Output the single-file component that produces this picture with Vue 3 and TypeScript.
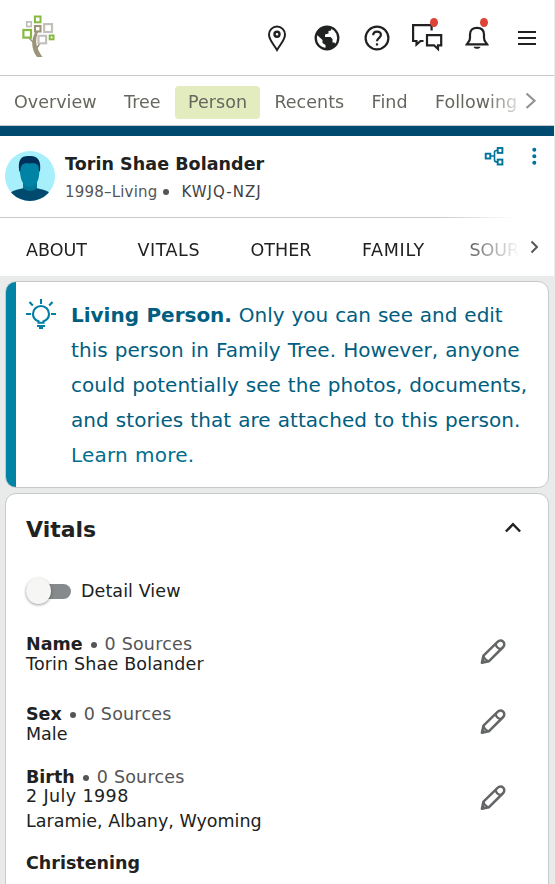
<script setup lang="ts">
interface Fact {
  label: string
  values: string[]
  sources: number
  kind: string
}

const navItems: { label: string; active?: boolean }[] = [
  { label: 'Overview' },
  { label: 'Tree' },
  { label: 'Person', active: true },
  { label: 'Recents' },
  { label: 'Find' },
  { label: 'Following' },
]

const tabs: string[] = ['ABOUT', 'VITALS', 'OTHER', 'FAMILY', 'SOURCES']

const facts: Fact[] = [
  { label: 'Name', values: ['Torin Shae Bolander'], sources: 0, kind: 'name' },
  { label: 'Sex', values: ['Male'], sources: 0, kind: 'sex' },
  { label: 'Birth', values: ['2 July 1998', 'Laramie, Albany, Wyoming'], sources: 0, kind: 'birth' },
]
</script>

<template>
  <div class="page">
    <header class="topbar">
      <svg class="logo" width="34" height="44" viewBox="0 0 34 44">
        <path d="M13.500 17C8.500 25 9.500 35 15 42H20.500C14 33 12.500 26 16 17Z" fill="#9c9479" />
        <path d="M7 23L12 28M18 28L14 34.500" fill="none" stroke="#9c9479" stroke-width="1.500" />
        <g fill="#fff">
          <rect x="12.900" y="1.500" width="5.600" height="5.800" stroke="#87b940" stroke-width="2" />
          <rect x="4.700" y="6.900" width="4.600" height="4.600" stroke="#bfbbb6" stroke-width="1.600" />
          <rect x="13" y="11" width="5.500" height="5.500" stroke="#9c9479" stroke-width="2.100" />
          <rect x="22.100" y="9.100" width="7.900" height="7.900" stroke="#c3c0bc" stroke-width="2.200" />
          <rect x="1.400" y="15" width="7.600" height="7.600" stroke="#87b940" stroke-width="2.200" />
          <rect x="16.500" y="20.800" width="7.600" height="7.500" stroke="#c3c0bc" stroke-width="2.200" />
          <rect x="27.700" y="20.500" width="3.800" height="3.800" stroke="#87b940" stroke-width="2" />
        </g>
      </svg>
      <div class="actions">
        <svg class="pin" width="20" height="28" viewBox="0 0 20 28" fill="none" stroke="#202121" stroke-width="2">
          <path d="M10 25C6.500 19 2 15 2 9.500a8 8 0 0 1 16 0C18 15 13.500 19 10 25Z" />
          <circle cx="10" cy="9.200" r="2.500" stroke-width="2.400" />
        </svg>
        <svg width="26" height="26" viewBox="0 0 26 26">
          <circle cx="13" cy="13" r="11.300" fill="#fff" stroke="#202121" stroke-width="2.300" />
          <path fill="#202121" d="M2 8.500C4 3.500 9 1 14 1.500L17.500 3 17 5.500 14.500 6V8.500L11 9.500V12H16.500L18.500 14V17.500H20.500L22 20 18 23.500 13 25 11.500 23V20L8.500 18V15L2 9Z" />
        </svg>
        <svg width="26" height="26" viewBox="0 0 26 26" fill="none" stroke="#202121" stroke-width="2.200">
          <circle cx="13" cy="13" r="11.400" />
          <path d="M9.200 10.300C9.200 8 10.800 6.700 13 6.700S16.900 8 16.900 10.100C16.900 12.800 13 12.900 13 16.300" />
          <path d="M13 18.300V20.500" />
        </svg>
        <div class="notified chat">
          <svg width="32" height="31" viewBox="0 0 32 31" fill="none" stroke="#202121" stroke-width="2.200">
            <path d="M20.600 9.500V4.100H2.100V20H5.500V23.500L9.500 20H12.500" />
            <path d="M16 14.200H30.200V24.300H27V28L23 24.300H16Z" />
          </svg>
          <i class="dot"></i>
        </div>
        <div class="notified bell">
          <svg width="26" height="26" viewBox="0 0 26 26" fill="none" stroke="#202121" stroke-width="2.200">
            <path d="M2.800 20.300C4 18 6 17.500 6 14V10.500C6 6.200 8.500 3.800 13 3.800S20 6.200 20 10.500V14C20 17.500 22 18 23.200 20.300Z" />
            <path d="M9.500 22.700H16.500C15.500 25.400 10.500 25.400 9.500 22.700Z" fill="#202121" stroke="none" />
          </svg>
          <i class="dot"></i>
        </div>
        <svg class="menu" width="18" height="16" viewBox="0 0 18 16" stroke="#202121" stroke-width="2">
          <path d="M0 2H18M0 8H18M0 14H18" />
        </svg>
      </div>
    </header>

    <nav class="nav">
      <div class="nav-list">
        <a v-for="item in navItems" :key="item.label" class="nav-item" :class="{ active: item.active }">{{ item.label }}</a>
      </div>
      <svg class="nav-next" width="12" height="18" viewBox="0 0 12 18" fill="none" stroke="#939393" stroke-width="2.200">
        <path d="M1.500 1.500L9.500 8.800L1.500 16" />
      </svg>
    </nav>
    <div class="stripe"></div>

    <section class="person">
      <svg class="avatar" width="50" height="50" viewBox="0 0 50 50">
        <defs><clipPath id="avatarClip"><circle cx="25" cy="25" r="25" /></clipPath></defs>
        <g clip-path="url(#avatarClip)">
          <rect width="50" height="50" fill="#a6effb" />
          <path d="M3 44C9 37 17 39 20 36H30C33 39 41 37 47 44V50H3Z" fill="#004a6f" />
          <path d="M18 27H32V36C32 41 18 41 18 36Z" fill="#007896" />
          <path d="M14.500 19L16 12H33L34.500 19L34 25C33 32 29 36 24.700 36S16.500 32 15.500 25Z" fill="#0083a5" />
          <path d="M14.500 21C12 8 17 4.500 24 5C32 4 37 9 34.800 21L33.800 19C33.800 12.500 31 12 25 12.500C19 12 16 12.500 15.600 19Z" fill="#00305a" />
        </g>
      </svg>
      <div class="identity">
        <h1>Torin Shae Bolander</h1>
        <p><span class="life">1998–Living</span><i class="bullet"></i><span class="pid">KWJQ-NZJ</span></p>
      </div>
      <div class="person-tools">
        <svg width="20" height="20" viewBox="0 0 20 20" fill="none" stroke="#00739a" stroke-width="1.900">
          <rect x="1.700" y="7.700" width="4.600" height="4.800" />
          <rect x="13.700" y="2" width="4.700" height="4.900" />
          <rect x="13.700" y="13.600" width="4.700" height="4.900" />
          <path d="M6 10H10.500M13.500 4.500H12.500Q10.500 4.500 10.500 6.500V13.700Q10.500 15.900 12.500 15.900H13.500" stroke-width="1.600" />
        </svg>
        <svg width="6" height="20" viewBox="0 0 6 20" fill="#00739a">
          <circle cx="3.300" cy="3.700" r="2" /><circle cx="3.300" cy="10.300" r="2" /><circle cx="3.300" cy="16.800" r="2" />
        </svg>
      </div>
    </section>

    <div class="rule"></div>
    <div class="tabs">
      <div class="tab-list">
        <a v-for="tab in tabs" :key="tab" class="tab">{{ tab }}</a>
      </div>
      <svg class="tab-next" width="9" height="14" viewBox="0 0 9 14" fill="none" stroke="#555657" stroke-width="2">
        <path d="M1.500 1.500L7 7L1.500 12.500" />
      </svg>
    </div>

    <main class="content">
      <section class="card notice">
        <svg class="bulb" width="30" height="31" viewBox="0 0 30 31" fill="none" stroke="#007fa3" stroke-width="2.100">
          <path d="M12.500 23.800V22.300C9 21 7 18.500 7 15A8 8 0 0 1 23 15C23 18.500 21 21 17.500 22.300V23.800Z" />
          <path d="M15 0V5M3.500 3L6.800 6.500M26.500 3L23.200 6.500M0 15H5M25 15H30M11 27H19M13 29H17" />
        </svg>
        <p>
          <span class="line l1"><b>Living Person.</b> Only you can see and edit </span>
          <span class="line l2">this person in Family Tree. However, anyone </span>
          <span class="line l3">could potentially see the photos, documents, </span>
          <span class="line l4">and stories that are attached to this person. </span>
          <a class="line l5">Learn more.</a>
        </p>
      </section>

      <section class="card vitals">
        <div class="card-head">
          <h2>Vitals</h2>
          <svg width="16" height="11" viewBox="0 0 16 11" fill="none" stroke="#202121" stroke-width="2.500">
            <path d="M0.900 9.500L8 2.200L15.100 9.500" />
          </svg>
        </div>
        <div class="toggle-row">
          <span class="toggle"><i class="knob"></i></span>
          <span>Detail View</span>
        </div>
        <div v-for="fact in facts" :key="fact.label" class="fact" :class="fact.kind">
          <div class="fact-text">
            <div class="fact-title"><b>{{ fact.label }}</b><i class="bullet"></i><span class="sources">{{ fact.sources }} Sources</span></div>
            <div v-for="value in fact.values" :key="value" class="fact-value">{{ value }}</div>
          </div>
          <svg class="pencil" width="26" height="26" viewBox="0 0 26 26" fill="none" stroke="#636566" stroke-width="2.500" stroke-linejoin="round">
            <path d="M1.900 23.800L3.500 16.600L17.800 2.700A3.700 3.700 0 0 1 23.200 8L8.800 22.300Z" />
            <path d="M15.600 5Q16.500 9.300 21 10.200M3.500 16.800Q4.500 21 8.800 22.200" stroke-width="2.200" />
            <path d="M1.300 24.500L2.600 19.500L6.300 23.200Z" fill="#636566" stroke="none" />
          </svg>
        </div>
        <div class="next-fact"><b>Christening</b></div>
      </section>
    </main>
  </div>
</template>

<style>
body {
  overflow: hidden;
  background: #ececec;
}
</style>

<style scoped>
.page {
  box-sizing: border-box;
  width: 554px;
  height: 884px;
  overflow: hidden;
  background: #fff;
  color: #202121;
  font-family: Verdana, "DejaVu Sans", sans-serif;
  font-size: 17.5px;
  white-space: nowrap;
}
h1, h2, p { margin: 0; }
svg { display: block; flex: none; }
.topbar {
  display: flex;
  align-items: flex-start;
  justify-content: space-between;
  height: 75px;
  padding: 0 18px 0 22px;
  box-sizing: border-box;
}
.logo { margin-top: 15px; }
.actions { display: flex; align-items: flex-start; padding-top: 25px; }
.actions > .pin { margin-right: 27px; }
.actions > svg + svg { margin-right: 24px; }
.actions > .menu { margin: 5px 0 0; }
.notified { position: relative; }
.chat { margin: -4px 24px 0 -3px; }
.bell { margin: -1px 28px 0 -3px; }
.dot {
  position: absolute;
  width: 8px;
  height: 9px;
  border-radius: 50%;
  background: #dc4437;
}
.chat .dot { left: 19px; top: -3px; }
.bell .dot { right: 2px; top: -6px; }
.nav {
  display: flex;
  align-items: center;
  box-sizing: border-box;
  height: 51px;
  padding-left: 1px;
  border-top: 1px solid #c8c9c9;
  border-bottom: 1px solid #c8c9c9;
  color: #66665f;
}
.nav-list {
  display: flex;
  gap: 1.4px;
  width: 519px;
  overflow: hidden;
  padding-top: 4px;
  mask-image: linear-gradient(90deg, #000 485px, transparent 525px);
}
.nav-item { padding: 0 13px; line-height: 33px; border-radius: 4px; letter-spacing: 0.03px; }
.active { background: #e2ecbf; }
.nav-next { margin-left: 5px; }
.stripe { height: 10px; background: #004a6f; }
.person {
  display: flex;
  align-items: flex-start;
  box-sizing: border-box;
  height: 81px;
  padding: 15px 17px 0 5px;
}
.identity { margin-left: 10px; }
h1 { font-size: 17.5px; line-height: 27px; letter-spacing: 0.05px; }
.identity p { display: flex; align-items: center; font-size: 15px; line-height: 26px; padding-top: 1px; color: #535556; }
.life { letter-spacing: 0.2px; }
.pid { color: #404142; letter-spacing: 1px; }
.bullet { width: 6px; height: 6px; border-radius: 50%; background: #535556; }
.identity .bullet { margin: 0 12px 0 6px; }
.person-tools { display: flex; gap: 27px; margin: -5px 0 0 auto; }
.rule { height: 1px; background: linear-gradient(90deg, #c8c9c9 440px, #fff 515px); }
.tabs { display: flex; align-items: center; height: 58px; }
.tab-list {
  display: flex;
  gap: 50.5px;
  box-sizing: border-box;
  width: 519px;
  padding: 6px 0 0 26px;
  overflow: hidden;
  mask-image: linear-gradient(90deg, #000 450px, transparent 520px);
}
.tab:nth-child(2) { letter-spacing: 0.55px; }
.tab:nth-child(4) { margin-right: -6px; letter-spacing: 0.7px; }
.tab-next { margin-left: 11px; }
.content { padding: 5px; background: #e9ebea; }
.card {
  box-sizing: border-box;
  width: 544px;
  background: #fff;
  border: 1px solid #c8caca;
  border-radius: 11px;
}
.notice {
  display: flex;
  height: 207px;
  margin-bottom: 5px;
  padding: 16px 0 0 10px;
  background: linear-gradient(90deg, #0083a5 10px, #fff 10px);
  color: #005e80;
  font-size: 20px;
  line-height: 35px;
}
.bulb { margin: 1px 15px 0 10px; }
.line { display: block; word-spacing: 0.6px; letter-spacing: 0.04px; }
.l1 { letter-spacing: -0.02px; }
.l2 { letter-spacing: 0.06px; }
.l3 { letter-spacing: 0.02px; }
.l4 { letter-spacing: 0.06px; }
.l5 { color: #006e8f; letter-spacing: 0.2px; }
.vitals { height: 420px; padding: 0 41px 0 20px; }
.card-head { display: flex; align-items: center; justify-content: space-between; padding-top: 21px; margin-right: -14px; }
.card-head svg { margin-top: -6px; }
h2 { font-size: 22px; line-height: 30px; }
.toggle-row { display: flex; align-items: center; gap: 10px; margin-top: 33px; height: 26px; letter-spacing: 0.08px; }
.toggle { position: relative; width: 45px; height: 15px; border-radius: 8px; background: #878a8c; }
.knob {
  position: absolute;
  left: 0;
  top: -6px;
  width: 25px;
  height: 26px;
  border-radius: 50%;
  background: #f6f6f4;
  box-shadow: 0 1px 3px rgba(0, 0, 0, 0.4);
}
.fact { display: flex; align-items: center; justify-content: space-between; line-height: 20px; }
.fact-title { display: flex; align-items: center; }
.fact .bullet { margin: 1px 8px 0 8px; }
.sources { color: #535556; letter-spacing: 0.2px; }
.pencil { margin: -4px 1px 0 0; }
.name { margin-top: 30px; }
.name .fact-value { letter-spacing: 0.16px; }
.sex { margin-top: 30px; }
.birth { margin-top: 23px; }
.birth .fact-value { margin-top: -1px; letter-spacing: 0.4px; }
.birth .fact-value + .fact-value { margin-top: 5px; letter-spacing: 0; }
.birth .pencil { margin-top: -3px; }
.next-fact { margin-top: 22px; line-height: 20px; }
</style>
